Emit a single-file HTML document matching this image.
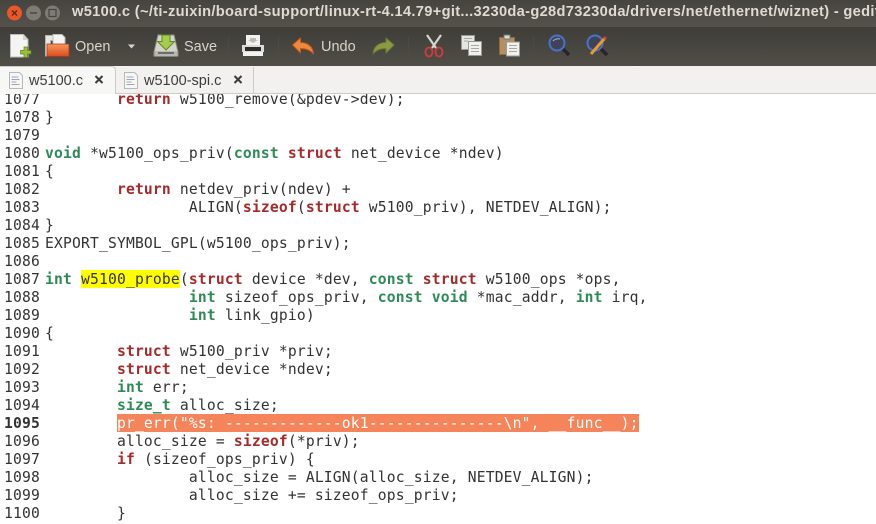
<!DOCTYPE html>
<html><head><meta charset="utf-8">
<style>
html,body{margin:0;padding:0;background:#fff}
#w{position:relative;width:876px;height:524px;overflow:hidden;background:#fff}
.a{position:absolute}
#title{left:0;top:0;width:876px;height:27px;background:linear-gradient(#45443f,#54524b)}
#title span{position:absolute;left:72px;top:3px;font:bold 14.67px/19px "Liberation Sans",sans-serif;letter-spacing:.31px;color:#dfdbd2;white-space:nowrap}
#tb{left:0;top:27px;width:876px;height:39px;background:linear-gradient(#3e3d38,#504e47)}
.t{position:absolute;font:14.5px/18px "Liberation Sans",sans-serif;color:#d8d4ca;white-space:nowrap}
#tabs{left:0;top:66px;width:876px;height:27px;background:#f2f1f0;border-bottom:1px solid #cfcac4;box-sizing:content-box}
.tab{position:absolute;font:14.5px/18px "Liberation Sans",sans-serif;color:#3c3c3c;white-space:nowrap}
.ln{position:absolute;left:0;width:876px;height:18px;font:14.67px/18px "DejaVu Sans Mono",monospace;color:#333;white-space:pre;letter-spacing:.17px}
.ln i{position:absolute;left:4px;top:1px;font-style:normal}
.ln u{position:absolute;left:45px;top:1px;text-decoration:none}
b.k{color:#a52a2a}
b.s{color:#2e8b57}
</style></head><body><div id="w">
<div class="a" id="title"><span>w5100.c (~/ti-zuixin/board-support/linux-rt-4.14.79+git...3230da-g28d73230da/drivers/net/ethernet/wiznet) - gedit</span></div>
<svg class="a" style="left:0;top:0" width="66" height="27" viewBox="0 0 66 27">
<circle cx="14.500" cy="13" r="7.500" fill="#e9572b"/><path d="M12 10.500l5 5M17 10.500l-5 5" stroke="#5c2a18" stroke-width="1.300"/>
<circle cx="33.500" cy="13" r="7.500" fill="#7d7b73"/><path d="M30 13h7" stroke="#45443f" stroke-width="1.400"/>
<circle cx="52.500" cy="13" r="7.500" fill="#7d7b73"/><rect x="49" y="9.500" width="7" height="7" fill="none" stroke="#45443f" stroke-width="1.200"/>
</svg>
<div class="a" id="tb"></div>
<svg class="a" style="left:0;top:27px" width="620" height="39" viewBox="0 27 620 39">
<!-- new -->
<path d="M10.500 34.500h13l4.500 5v17.500h-17.500z" fill="#f4f4f2" stroke="#bdbdb8"/><path d="M23 34.500v5.500h5" fill="#d4d4d0"/>
<path d="M24 47h3.500v3.500h3.500v3.500h-3.500v3.500h-3.500v-3.500h-3.500v-3.500h3.500z" fill="#9abf3c" stroke="#5d7d1c" stroke-width=".7"/>
<!-- open -->
<path d="M45.500 35.500h11v5h-6v15.500h-5z" fill="#e9e7e2" stroke="#b5b3ae"/><path d="M53 34.500h9l3 3v7h-12z" fill="#f4f4f2" stroke="#bbb"/>
<path d="M47 44h22v12.500h-22z" fill="url(#og)" stroke="#a8391a" stroke-width=".8"/>
<!-- arrow -->
<path d="M128 44.500h7l-3.500 4z" fill="#d8d4ca"/>
<!-- save -->
<path d="M158 35h16l4 17v4h-24v-4z" fill="#d5d4cc" stroke="#8f8d86"/>
<path d="M154.500 51h23v5.500h-23z" fill="#b9b8b0"/><path d="M158 53h16" stroke="#55544f" stroke-width="1.500"/>
<path d="M162 35h8v6.500h4.500l-8.500 8.500-8.500-8.500h4.500z" fill="#a5cc4e" stroke="#5f8a1f"/>
<!-- seps -->
<path d="M228.500 36v20M278.500 36v20M408.500 36v20M533.500 36v20" stroke="#4c4a44"/>
<!-- print -->
<path d="M246 35h14v10h-14z" fill="#f2f2f0"/><path d="M250 38h6v2h2l-5 3-5-3h2z" fill="#bdbdb8"/>
<path d="M242 45h22v7h-22z" fill="#dcdcd8"/><path d="M245 47h16v4h-16z" fill="#2c2c2a"/><path d="M243 52h20v4h-20z" fill="#f2f2f0"/>
<!-- undo -->
<path d="M292.500 45l8-7v4.500c7 0 12.500 4 13 11.500c-3-4-7-5.500-13-5.500v4.500z" fill="#ec8a3c" stroke="#c9571a" stroke-linejoin="round"/>
<!-- redo -->
<path d="M394 45l-8-7v4.500c-7 0-12.500 4-13 11.500c3-4 7-5.500 13-5.500v4.500z" fill="#8a9a44" stroke="#6d7c30" stroke-linejoin="round"/>
<!-- scissors -->
<path d="M427 35l9 13M441 35l-9 13" stroke="#d5d5d0" stroke-width="2.200"/>
<ellipse cx="429" cy="52" rx="3.500" ry="4.500" fill="none" stroke="#d23b3b" stroke-width="1.800"/><ellipse cx="439" cy="52" rx="3.500" ry="4.500" fill="none" stroke="#d23b3b" stroke-width="1.800"/>
<!-- copy -->
<path d="M461.500 35.500h13v14h-13z" fill="#e4e4e0" stroke="#9a9a94"/><path d="M468.500 41.500h13v14h-13z" fill="#f0f0ec" stroke="#9a9a94"/>
<path d="M471 45.500h8M471 48.500h8M471 51.500h8M464 38.500h8M464 41h4" stroke="#a8a8a2"/>
<!-- paste -->
<path d="M499.500 37.500h15v17h-15z" fill="#b58f5f" stroke="#8a6c44"/><path d="M504 35h6v4h-6z" fill="#dcdcd6" stroke="#777"/>
<path d="M506.500 42h13v14h-13z" fill="#f0f0ec" stroke="#9a9a94"/><path d="M509 45.500h8M509 48.500h8M509 51.500h8" stroke="#a8a8a2"/>
<!-- find -->
<path d="M563 49l6 6" stroke="#26262a" stroke-width="3.500"/><circle cx="557" cy="43" r="7.500" fill="#40425a" stroke="#4a72c4" stroke-width="2"/><path d="M553 41q3-3 7-2" stroke="#aeb8d0" fill="none"/>
<!-- replace -->
<path d="M601 49l6 6" stroke="#26262a" stroke-width="3.500"/><circle cx="595" cy="43" r="7.500" fill="#40425a" stroke="#4a72c4" stroke-width="2"/>
<path d="M591 54l14-16" stroke="#e89a2c" stroke-width="3"/><path d="M604 39l2-2" stroke="#d0403c" stroke-width="3"/>
<defs><linearGradient id="og" x1="0" y1="0" x2="0" y2="1"><stop offset="0" stop-color="#f49a5c"/><stop offset="1" stop-color="#dd4a1c"/></linearGradient></defs>
</svg>
<div class="t" style="left:75px;top:38px">Open</div>
<div class="t" style="left:184px;top:38px">Save</div>
<div class="t" style="left:321px;top:38px">Undo</div>
<div class="a" id="tabs"></div>
<div class="a" style="left:0;top:66px;width:116px;height:28px;background:#f7f7f6;border:1px solid #cfcac4;border-bottom:0;border-left:0;border-radius:0 4px 0 0;box-sizing:border-box"></div>
<div class="a" style="left:253px;top:67px;width:1px;height:26px;background:#cfcac4"></div>
<svg class="a" style="left:0;top:66px" width="260" height="28" viewBox="0 66 260 28">
<path d="M9.500 72.500h10l3 3v13h-13z" fill="#f6f6f4" stroke="#b8b8b4"/><path d="M11.500 77h7M11.500 79.500h8M11.500 82h5M11.500 84.500h8" stroke="#9aa6c0"/>
<path d="M124.500 72.500h10l3 3v13h-13z" fill="#f6f6f4" stroke="#b8b8b4"/><path d="M126.500 77h7M126.500 79.500h8M126.500 82h5M126.500 84.500h8" stroke="#9aa6c0"/>
<path d="M95.500 76l7 7M102.500 76l-7 7M234.500 76l7 7M241.500 76l-7 7" stroke="#3c3c3c" stroke-width="2"/>
</svg>
<div class="tab" style="left:29px;top:72px">w5100.c</div>
<div class="tab" style="left:144px;top:72px">w5100-spi.c</div>
<div class="a" style="left:0;top:94px;width:876px;height:430px;overflow:hidden;background:#fff">
<div class="a" style="left:81px;top:176px;width:99px;height:18px;background:#ff0"></div>
<div class="a" style="left:117px;top:320px;width:522px;height:18px;background:#f5845a"></div>
<div class="ln" style="top:-4px"><i>1077</i><u>        <b class="k">return</b> w5100_remove(&amp;pdev-&gt;dev);</u></div>
<div class="ln" style="top:14px"><i>1078</i><u>}</u></div>
<div class="ln" style="top:32px"><i>1079</i></div>
<div class="ln" style="top:50px"><i>1080</i><u><b class="s">void</b> *w5100_ops_priv(<b class="s">const</b> <b class="k">struct</b> net_device *ndev)</u></div>
<div class="ln" style="top:68px"><i>1081</i><u>{</u></div>
<div class="ln" style="top:86px"><i>1082</i><u>        <b class="k">return</b> netdev_priv(ndev) +</u></div>
<div class="ln" style="top:104px"><i>1083</i><u>                ALIGN(<b class="k">sizeof</b>(<b class="k">struct</b> w5100_priv), NETDEV_ALIGN);</u></div>
<div class="ln" style="top:122px"><i>1084</i><u>}</u></div>
<div class="ln" style="top:140px"><i>1085</i><u>EXPORT_SYMBOL_GPL(w5100_ops_priv);</u></div>
<div class="ln" style="top:158px"><i>1086</i></div>
<div class="ln" style="top:176px"><i>1087</i><u><b class="s">int</b> w5100_probe(<b class="k">struct</b> device *dev, <b class="s">const</b> <b class="k">struct</b> w5100_ops *ops,</u></div>
<div class="ln" style="top:194px"><i>1088</i><u>                <b class="s">int</b> sizeof_ops_priv, <b class="s">const</b> <b class="s">void</b> *mac_addr, <b class="s">int</b> irq,</u></div>
<div class="ln" style="top:212px"><i>1089</i><u>                <b class="s">int</b> link_gpio)</u></div>
<div class="ln" style="top:230px"><i>1090</i><u>{</u></div>
<div class="ln" style="top:248px"><i>1091</i><u>        <b class="k">struct</b> w5100_priv *priv;</u></div>
<div class="ln" style="top:266px"><i>1092</i><u>        <b class="k">struct</b> net_device *ndev;</u></div>
<div class="ln" style="top:284px"><i>1093</i><u>        <b class="s">int</b> err;</u></div>
<div class="ln" style="top:302px"><i>1094</i><u>        <b class="s">size_t</b> alloc_size;</u></div>
<div class="ln" style="top:320px"><i><b>1095</b></i><u style="color:#fff">        pr_err("%s: -------------ok1---------------\n", __func__);</u></div>
<div class="ln" style="top:338px"><i>1096</i><u>        alloc_size = <b class="k">sizeof</b>(*priv);</u></div>
<div class="ln" style="top:356px"><i>1097</i><u>        <b class="k">if</b> (sizeof_ops_priv) {</u></div>
<div class="ln" style="top:374px"><i>1098</i><u>                alloc_size = ALIGN(alloc_size, NETDEV_ALIGN);</u></div>
<div class="ln" style="top:392px"><i>1099</i><u>                alloc_size += sizeof_ops_priv;</u></div>
<div class="ln" style="top:410px"><i>1100</i><u>        }</u></div>
</div>
</div></body></html>
